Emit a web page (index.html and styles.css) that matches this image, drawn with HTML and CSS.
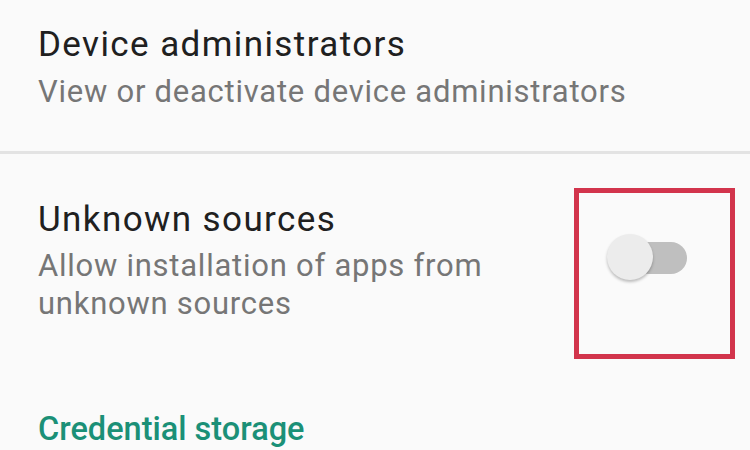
FILE: index.html
```html
<!DOCTYPE html>
<html>
<head>
<meta charset="utf-8">
<link rel="stylesheet" href="styles.css">
</head>
<body>
<div class="screen">
  <div class="pref pref-top">
    <div class="title">Device administrators</div>
    <div class="summary">View or deactivate device administrators</div>
  </div>
  <div class="divider"></div>
  <div class="pref pref-switch">
    <div class="texts">
      <div class="title">Unknown sources</div>
      <div class="summary">Allow installation of apps from<br>unknown sources</div>
    </div>
    <div class="highlight">
      <div class="switch">
        <div class="track"></div>
        <div class="thumb"></div>
      </div>
    </div>
  </div>
  <div class="category">Credential storage</div>
</div>
</body>
</html>
```
FILE: styles.css
```css
html, body {
  margin: 0;
  padding: 0;
}
body {
  background: #fafafa;
  font-family: Roboto, "Noto Sans", sans-serif;
  width: 750px;
  height: 450px;
  overflow: hidden;
}
.screen {
  display: flex;
  flex-direction: column;
}
.pref {
  padding-left: 38px;
}
.pref-top {
  padding-top: 23px;
  padding-bottom: 40px;
}
.title {
  font-size: 35px;
  line-height: 44px;
  letter-spacing: 1.4px;
  color: #202020;
}
.summary {
  font-size: 31px;
  line-height: 38px;
  letter-spacing: 0.75px;
  color: #767676;
}
.pref-top .summary {
  margin-top: 6px;
}
.divider {
  height: 3px;
  background: #e3e3e3;
}
.pref-switch {
  display: flex;
  align-items: flex-start;
  padding-top: 34px;
  padding-right: 15px;
}
.texts {
  flex: 1;
  padding-top: 10px;
}
.pref-switch .summary {
  margin-top: 5px;
}
.highlight {
  width: 161px;
  height: 171px;
  box-sizing: border-box;
  border: 5px solid #d2344c;
  display: flex;
  padding-top: 41px;
  padding-left: 28px;
}
.switch {
  position: relative;
  width: 80px;
  height: 48px;
}
.track {
  position: absolute;
  left: 26px;
  top: 8px;
  width: 54px;
  height: 32px;
  border-radius: 16px;
  background: #bfbfbf;
}
.thumb {
  position: absolute;
  left: 0;
  top: 0;
  width: 46px;
  height: 46px;
  border-radius: 50%;
  background: #ececec;
  box-shadow: 0 2px 3px rgba(0,0,0,0.25);
}
.category {
  padding-left: 38px;
  margin-top: 50px;
  font-size: 32.5px;
  line-height: 40px;
  font-weight: 500;
  color: #1b9077;
}
```
